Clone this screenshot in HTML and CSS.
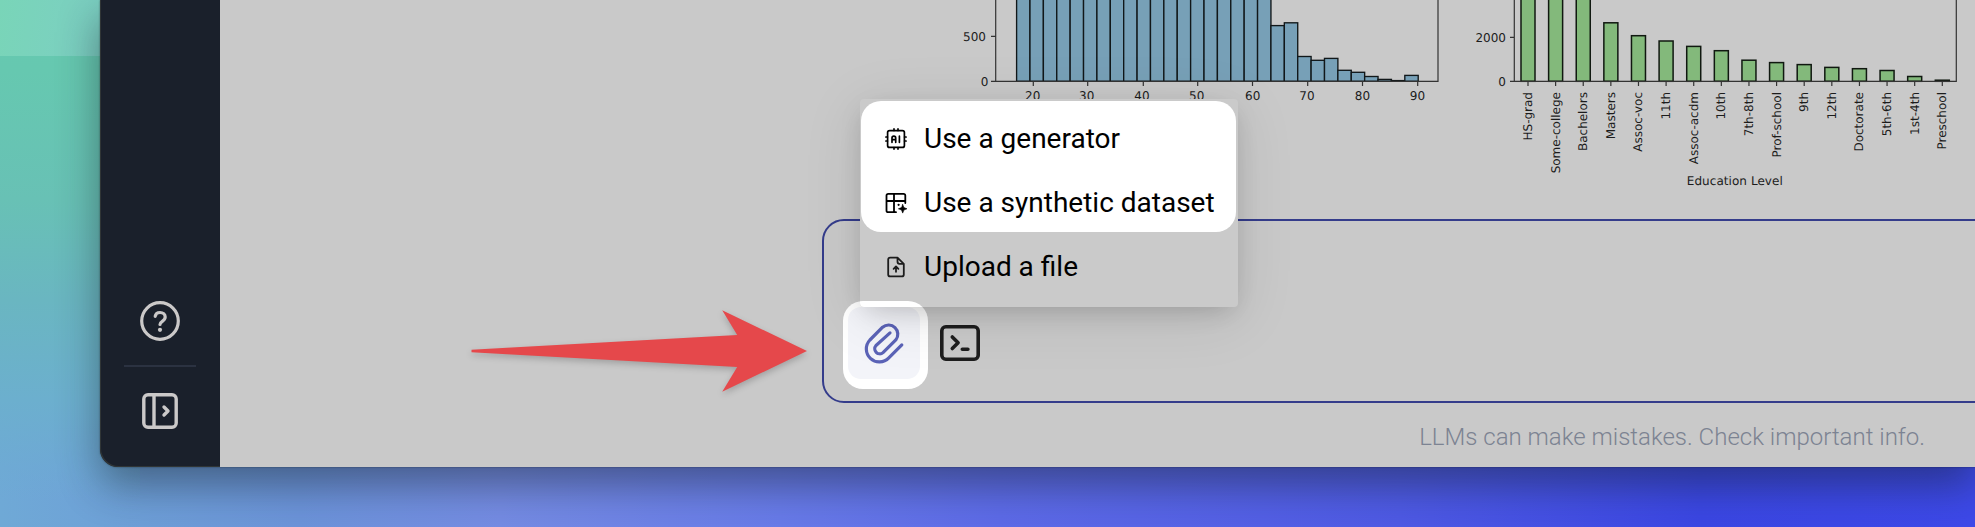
FILE: index.html
```html
<!DOCTYPE html>
<html lang="en">
<head>
<meta charset="utf-8">
<title>Chat</title>
<link rel="stylesheet" href="styles.css">
</head>
<body>
<div class="menubar"></div>
<div class="window">
  <nav class="sidebar">
    <svg class="nav-icon" width="40" height="40" viewBox="0 0 40 40" fill="none" stroke="currentColor" stroke-width="3.2" stroke-linecap="round" stroke-linejoin="round">
      <circle cx="20" cy="20" r="18.3"/>
      <path d="M15.2 15.3C15.6 12.7 17.6 11.5 20 11.5c3 0 5.2 1.8 5.2 4.5 0 4.3-5.2 4.2-5.2 7.4"/>
      <circle cx="20" cy="28.8" r="2.1" fill="currentColor" stroke="none"/>
    </svg>
    <div class="divider"></div>
    <svg class="nav-icon" width="36" height="36" viewBox="0 0 36 36" fill="none" stroke="currentColor" stroke-width="3.4" stroke-linecap="round" stroke-linejoin="round">
      <rect x="1.8" y="1.8" width="32.4" height="32.4" rx="4.2"/>
      <path d="M12 2v32M22 14l4 4-4 4"/>
    </svg>
  </nav>
  <main class="main">
    <svg class="charts" width="1755" height="219" viewBox="220 0 1755 219">
      <g id="ages" class="age-bars"></g>
      <g id="levels" class="level-bars"></g>
      <g class="axes">
        <path d="M995.7 0V81.3H1438V0M991 36.3h4.7M991 81.3h4.7"/>
        <path d="M1033.3 81v5M1087.7 81v5M1143.3 81v5M1197.7 81v5M1252.5 81v5M1307.7 81v5M1362.5 81v5M1417.7 81v5"/>
        <path d="M1514.3 0V81.3H1956.3V0M1510 37.3h4.3M1510 81.3h4.3"/>
      </g>
      <g class="labels end"><text x="986" y="40.8">500</text><text x="988.5" y="85.8">0</text><text x="1506" y="41.8">2000</text><text x="1506" y="85.8">0</text></g>
      <g class="labels mid">
        <text x="1032.7" y="99.8">20</text><text x="1086.7" y="99.8">30</text><text x="1142" y="99.8">40</text><text x="1196.7" y="99.8">50</text><text x="1252.7" y="99.8">60</text><text x="1307" y="99.8">70</text><text x="1362.5" y="99.8">80</text><text x="1417.5" y="99.8">90</text>
        <text x="1734.8" y="185.3" textLength="96">Education Level</text>
      </g>
      <g id="names" class="labels end"></g>
    </svg>
    <section class="composer">
      <div class="attach"><div class="attach-button">
        <svg width="48" height="48" viewBox="0 0 48 48" fill="none" stroke="#5b63b7" stroke-width="3.2" stroke-linecap="round" stroke-linejoin="round">
          <path d="M41.8 25.9 28.8 38.9A13 13 0 0 1 9.9 21L22.6 8.2A9.2 9.2 0 0 1 35.8 20.9L23 33.6A5 5 0 0 1 16 26.5L30 13.9" />
        </svg>
      </div></div>
      <svg class="terminal" width="40" height="36" viewBox="0 0 40 36" fill="none" stroke="#1e1e1e" stroke-width="3.6" stroke-linecap="round" stroke-linejoin="round">
        <rect x="1.8" y="1.8" width="36.4" height="32.4" rx="4"/>
        <path d="M12.3 12l5.8 5.8-5.8 5.7M22.3 24.2h5.6"/>
      </svg>
    </section>
    <p class="notice">LLMs can make mistakes. Check important info.</p>
    <div class="popover">
      <div class="spotlight"></div>
      <div class="spotlight-lower"></div>
      <div class="item">
        <svg width="22" height="22" viewBox="0 0 22 22" fill="none" stroke="#000" stroke-width="1.7" stroke-linecap="round" stroke-linejoin="round">
          <rect x="2.6" y="2.6" width="16.8" height="16.8" rx="2"/>
          <path d="M9 .9v1.5M13 .9v1.5M9 19.6v1.5M13 19.6v1.5M.9 9h1.5M.9 13h1.5M19.6 9h1.5M19.6 13h1.5M7 14.3V10c0-2.4 3.7-2.4 3.7 0v4.3M7 11.7h3.7M14.4 8.2v6.1"/>
        </svg><span>Use a generator</span>
      </div>
      <div class="item">
        <svg width="22" height="22" viewBox="0 0 22 22" fill="none" stroke="#000" stroke-width="1.8" stroke-linecap="round" stroke-linejoin="round">
          <path d="M11 20.2H3.3c-1.2 0-1.8-.6-1.8-1.8V3.6c0-1.2.6-1.8 1.8-1.8h15.2c1.2 0 1.8.6 1.8 1.8V11M1.5 9h18.8M9 1.8v18.4"/>
          <path d="M17.7 12.5l1.2 3.1 3.1 1.2-3.1 1.2-1.2 3.1-1.2-3.1-3.1-1.2 3.1-1.2z" fill="#000" stroke-width=".6"/>
          <circle cx="13.6" cy="12.8" r="1.1" fill="#000" stroke="none"/>
        </svg><span>Use a synthetic dataset</span>
      </div>
      <div class="item">
        <svg width="22" height="22" viewBox="0 0 22 22" fill="none" stroke="#1c1c1c" stroke-width="1.8" stroke-linecap="round" stroke-linejoin="round">
          <path d="M12.5 1.6H5.2c-1.2 0-2 .8-2 2v14.8c0 1.2.8 2 2 2h11.6c1.2 0 2-.8 2-2V7.8zv4.2c0 1.2.8 2 2 2h4.3M11 15.8V10.6M8.6 12.8l2.4-2.3 2.4 2.3"/>
        </svg><span>Upload a file</span>
      </div>
    </div>
    <svg class="arrow" width="340" height="86" viewBox="0 0 340 86"><path d="M.5 42.7 266.2 28 251.2 3.3 336 44 251.2 84.7 266.2 60 .5 45.2z" fill="#e5484b"/></svg>
  </main>
</div>
<script src="charts.js"></script>
</body>
</html>
```

FILE: styles.css
```css
* { box-sizing: border-box; }
body {
  margin: 0;
  height: 527px;
  padding-left: 100px;
  overflow: hidden;
  position: relative;
  font-family: Roboto, sans-serif;
  background:
    linear-gradient(to bottom, #66cab0 0, #66c8b0 70px, #68c1b5 200px, #6ab6c1 300px, #6cafce 400px, rgba(109, 171, 210, .5) 466px, rgba(109, 171, 210, 0) 500px) 0 0 / 140px 100% no-repeat,
    linear-gradient(to right, #6fa9d6 0, #6c94da 300px, #758ce4 500px, #687be9 780px, #5d6be8 1000px, #4e5ae5 1400px, #3b47e4 1700px, #3d49e9 1975px);
}
.menubar {
  position: absolute;
  inset: 0 0 auto 0;
  height: 56px;
  background: linear-gradient(100deg, #79d5b8, #7ccfc2 100px);
}
.window {
  position: relative;
  display: flex;
  width: 1875px;
  height: 467px;
  border-bottom-left-radius: 18px;
  box-shadow: 0 18px 42px rgba(20, 30, 40, .46), 0 0 2px rgba(0, 0, 0, .5);
}
.sidebar {
  width: 120px;
  padding-bottom: 38px;
  display: flex;
  flex-direction: column;
  justify-content: flex-end;
  align-items: center;
  color: #cbc9c9;
  background: #1a202b;
  box-shadow: inset 1px -1px #303536;
  border-bottom-left-radius: 18px;
}
.nav-icon { display: block; }
.divider { width: 72px; height: 2px; margin: 24px 0 26px; background: #2b3241; }
.main {
  position: relative;
  width: 1755px;
  background: #c9c9c9;
  overflow: hidden;
}
.charts { display: block; }
.age-bars rect { fill: #77a0b7; stroke: #111719; stroke-width: 1.35; }
.level-bars rect { fill: #83b97b; stroke: #101810; stroke-width: 1.5; }
.axes path { fill: none; stroke: #333; stroke-width: 1.2; }
.labels { font: 12px "DejaVu Sans", sans-serif; fill: #1c1c1c; text-rendering: geometricPrecision; }
.end { text-anchor: end; }
.mid { text-anchor: middle; }
.composer {
  height: 184px;
  margin-left: 602px;
  width: 1200px;
  padding: 80px 0 0 19px;
  display: flex;
  align-items: flex-start;
  gap: 12px;
  border: 2px solid #343c8b;
  border-radius: 22px;
}
.attach {
  width: 85px;
  height: 88px;
  padding: 6px 8px 10px 5px;
  background: #fff;
  border-radius: 20px;
}
.attach-button {
  width: 72px;
  height: 72px;
  display: grid;
  place-items: center;
  border-radius: 13px;
  background: #f3f4f9;
}
.terminal { margin-top: 24px; }
.notice {
  margin: 20px 50px 0 0;
  text-align: right;
  color: #7c8392;
  font-weight: 300;
  font-size: 24px;
  line-height: 28px;
}
.popover {
  position: absolute;
  left: 640px;
  top: 99px;
  width: 378px;
  height: 208px;
  padding: 8px 0 0 25px;
  overflow: hidden;
  background: #cacaca;
  border-radius: 4px;
  box-shadow: 0 10px 60px rgba(0, 0, 0, .1), 0 8px 24px -6px rgba(0, 0, 0, .18);
}
.spotlight {
  position: absolute;
  left: .5px;
  top: 2px;
  width: 375.5px;
  height: 130.5px;
  border-radius: 20px;
  background: #fff;
}
.spotlight-lower {
  position: absolute;
  left: -17px;
  top: 202px;
  width: 85px;
  height: 88px;
  border-radius: 20px;
  background: #fff;
}
.item {
  position: relative;
  height: 64px;
  display: flex;
  align-items: center;
  gap: 17px;
  color: #000;
  font-size: 28px;
  line-height: 32px;
  white-space: nowrap;
}
.arrow {
  position: absolute;
  left: 251px;
  top: 307px;
  overflow: visible;
  filter: drop-shadow(0 3px 3px rgba(0, 0, 0, .2));
}
```

FILE: charts.js
```js
const NS = 'http://www.w3.org/2000/svg';
function bar(parent, x, y, w) {
  const r = document.createElementNS(NS, 'rect');
  r.setAttribute('x', x);
  r.setAttribute('y', y);
  r.setAttribute('width', w);
  r.setAttribute('height', 81.3 - y);
  parent.appendChild(r);
}

const ages = document.getElementById('ages');
const tops = Array(19).fill(-5).concat([25.6, 22.8, 56.5, 60.3, 58.4, 70.3, 72.3, 76.5, 79.4, 80.6, 75.4]);
const step = (1418.2 - 1016.6) / tops.length;
tops.forEach((top, i) => bar(ages, 1016.6 + i * step, top, step));

const levels = [
  ['HS-grad', -5], ['Some-college', -5], ['Bachelors', -5], ['Masters', 22.8],
  ['Assoc-voc', 35.7], ['11th', 41], ['Assoc-acdm', 46.4], ['10th', 50.7],
  ['7th-8th', 60.2], ['Prof-school', 62.6], ['9th', 64.6], ['12th', 67.4],
  ['Doctorate', 68.7], ['5th-6th', 70.5], ['1st-4th', 76.5], ['Preschool', 80.2]
];
const levelBars = document.getElementById('levels');
const names = document.getElementById('names');
const axes = document.querySelector('.axes');
levels.forEach(([name, top], i) => {
  const x = 1528 + i * 27.62;
  bar(levelBars, x - 7, top, 14);
  const tick = document.createElementNS(NS, 'path');
  tick.setAttribute('d', `M${x} 81v5`);
  axes.appendChild(tick);
  const t = document.createElementNS(NS, 'text');
  t.setAttribute('transform', `translate(${x + 4} 92) rotate(-90)`);
  t.textContent = name;
  names.appendChild(t);
});
```
